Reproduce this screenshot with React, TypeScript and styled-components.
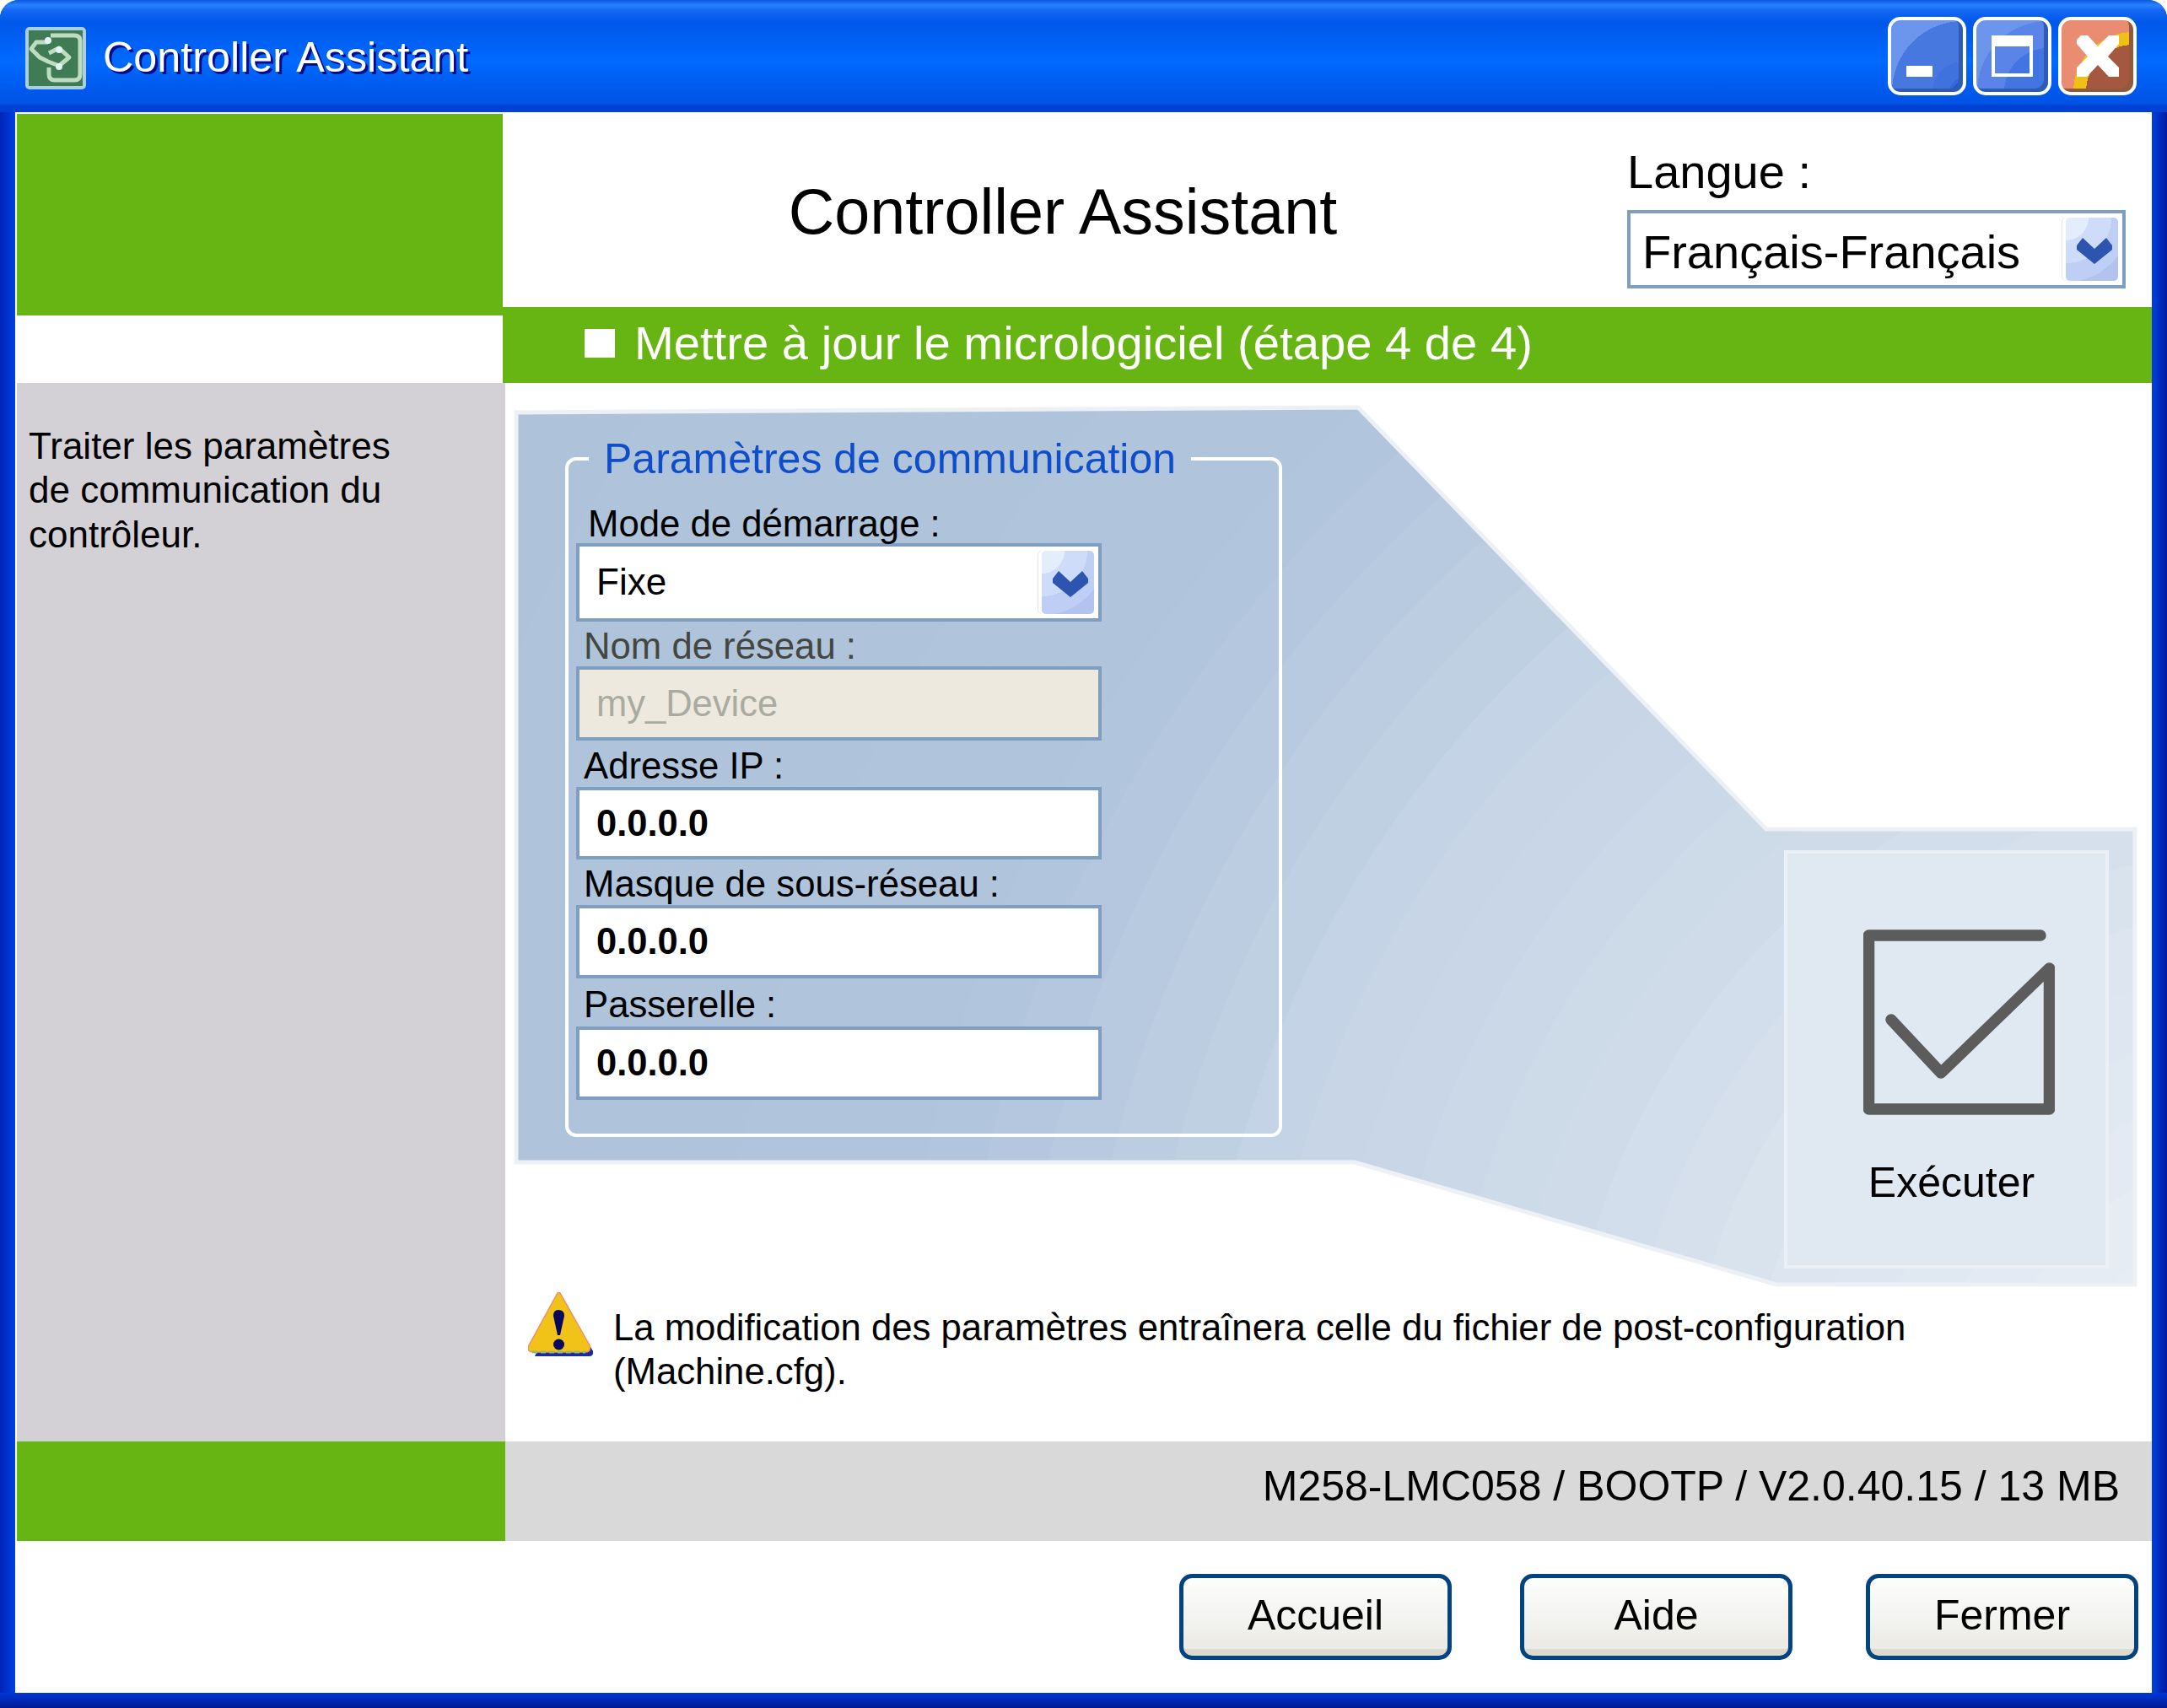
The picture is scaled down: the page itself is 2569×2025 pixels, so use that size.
import React from 'react'
import styled, { createGlobalStyle } from 'styled-components'

const GlobalStyle = createGlobalStyle`
  html, body {
    margin: 0;
    padding: 0;
    background: #fff;
  }

  * {
    box-sizing: border-box;
  }
`

const Window = styled.div`
  width: 2569px;
  height: 2025px;
  display: flex;
  flex-direction: column;
  border-radius: 22px 22px 0 0;
  overflow: hidden;
  font-family: "Liberation Sans", Arial, sans-serif;
  color: #000;
  background: linear-gradient(to right, #0024b8 0, #0040e0 18px, #0040e0 2551px, #001ca0 2569px);
`

const TitleBar = styled.div`
  height: 133px;
  flex: none;
  display: flex;
  align-items: center;
  padding: 5px 36px 0 29px;
  background: linear-gradient(
    to bottom,
    #0a58e0 0,
    #2a82ff 6px,
    #1468f4 12px,
    #0058ea 26px,
    #0060f4 50px,
    #006aff 72px,
    #005cf0 100px,
    #0054e6 122px,
    #0040d4 126px,
    #0040d4 133px
  );
`

const AppIcon = styled.svg`
  width: 74px;
  height: 76px;
  flex: none;
`

const TitleText = styled.div`
  margin: -3px 0 0 19px;
  font-size: 50.300px;
  color: #fff;
  text-shadow: 3px 3px 0 #000c8c;
`

const WindowButtons = styled.div`
  margin-left: auto;
  margin-top: -5px;
  display: flex;
  gap: 8px;
`

const WindowButton = styled.div<{ $tone: 'min' | 'max' | 'close' }>`
  width: 93px;
  height: 93px;
  border: 4px solid #fff;
  border-radius: 15px;
  display: flex;
  align-items: center;
  justify-content: center;
  position: relative;
  background: ${p =>
    p.$tone === 'close'
      ? 'radial-gradient(circle at 100% 100%, #a5573f 0 56px, #f0c015 56px 71px, #ea8c72 71px)'
      : p.$tone === 'max'
      ? 'radial-gradient(circle at 100% 100%, #4275e2 0 52px, #5b84e8 52px 84px, #6c96ec 84px 116px, #7a96e6 116px)'
      : 'radial-gradient(circle at 100% 100%, #0a50d8 0 12px, #3468d6 12px 16px, #3f72dc 16px 36px, #4678e0 36px 84px, #6c96ec 84px)'};
  box-shadow: inset -5px -4px 0 ${p => (p.$tone === 'close' ? '#8f5a3c' : '#2e5cb4')};
`

const MinGlyph = styled.div`
  position: absolute;
  left: 18px;
  top: 54px;
  width: 31px;
  height: 13px;
  background: #fff;
`

const MaxGlyph = styled.div`
  width: 49px;
  height: 49px;
  border: 4px solid #fff;
  border-top-width: 13px;
`

const CloseGlyph = styled.svg`
  width: 50px;
  height: 49px;
`

const Body = styled.div`
  flex: 1;
  margin: 0 18px;
  background: #fff;
  display: flex;
  flex-direction: column;
`

const Content = styled.div`
  height: 1694px;
  padding-left: 2px;
  display: grid;
  grid-template-columns: 579px 1fr;
`

const LeftColumn = styled.div`
  display: flex;
  flex-direction: column;
  padding-top: 2px;
`

const GreenBlock = styled.div`
  width: 576px;
  height: 239px;
  background: #66b512;
`

const SidePanel = styled.div`
  margin-top: 80px;
  height: 1255px;
  padding: 49px 125px 0 14px;
  background: #d3d1d6;
  font-size: 44px;
  line-height: 52.400px;
`

const GreenFoot = styled.div`
  height: 118px;
  background: #66b512;
`

const RightColumn = styled.div`
  display: flex;
  flex-direction: column;
  min-width: 0;
`

const Header = styled.div`
  height: 231px;
  display: flex;
  padding: 41px 31px 0 0;
`

const AppTitle = styled.div`
  flex: 1;
  padding: 32px 8px 0 0;
  text-align: center;
  font-size: 75.500px;
  line-height: 90px;
`

const LanguageBox = styled.div`
  width: 591px;
  font-size: 56px;
  line-height: 60px;
`

const LanguageLabel = styled.div`
  margin-bottom: 15px;
`

const SelectBox = styled.div<{ $large?: boolean }>`
  height: 93px;
  border: 4px solid #7f9fc2;
  background: #fff;
  display: flex;
  align-items: center;
  justify-content: space-between;
  padding: 0 5px 0 ${p => (p.$large ? 14 : 20)}px;
  font-size: ${p => (p.$large ? 56 : 44)}px;
`

const SelectText = styled.span<{ $large?: boolean }>`
  position: relative;
  top: ${p => (p.$large ? 3 : -1)}px;
`

const ArrowButton = styled.div`
  width: 62px;
  height: 75px;
  border-radius: 5px;
  display: flex;
  align-items: center;
  justify-content: center;
  background: radial-gradient(circle 90px at 0 0, #e4edfc 0 30%, #cfdcf9 30% 60%, #bfcef4 60% 85%, #b3c3ef 85%);
  box-shadow: -4px 0 0 #fff, -5px 0 0 #e6e6e6;
`

const Chevron = styled.svg`
  width: 42px;
  height: 31px;
  margin: 4px 0 0 6px;
`

const StepBar = styled.div`
  height: 90px;
  margin-left: -3px;
  padding: 0 0 5px 97px;
  display: flex;
  align-items: center;
  gap: 23px;
  background: #66b512;
  color: #fff;
  font-size: 56.200px;
`

const StepMark = styled.div`
  width: 36px;
  height: 34px;
  background: #fff;
`

const Main = styled.div`
  height: 1255px;
  position: relative;
  padding-top: 62px;
`

const Funnel = styled.svg`
  position: absolute;
  left: 0;
  top: 0;
  width: 100%;
  height: 100%;
`

const WorkRow = styled.div`
  position: relative;
  display: flex;
  align-items: flex-start;
  padding: 0 51px 0 71px;
`

const GroupBox = styled.fieldset`
  width: 850px;
  height: 832px;
  margin: 0;
  padding: 0 0 0 9px;
  border: 4px solid #fff;
  border-radius: 13px;
`

const GroupTitle = styled.legend`
  margin-left: 15px;
  padding: 0 18px;
  font-size: 50px;
  line-height: 56px;
  color: #0f4ecb;
`

const FieldLabel = styled.div<{ $muted?: boolean; $first?: boolean; $height: number }>`
  height: ${p => p.$height}px;
  padding: ${p => (p.$first ? '25px 0 0 14px' : '2px 0 0 9px')};
  line-height: ${p => (p.$first ? 48 : p.$height)}px;
  font-size: 43.700px;
  white-space: nowrap;
  color: ${p => (p.$muted ? '#444640' : '#000')};
`

const TextField = styled.div<{ $disabled?: boolean; $height: number }>`
  width: 623px;
  height: ${p => p.$height}px;
  border: 4px solid #7f9fc2;
  display: flex;
  align-items: center;
  padding-left: 20px;
  font-size: 43.500px;
  font-weight: ${p => (p.$disabled ? 400 : 700)};
  background: ${p => (p.$disabled ? '#ede9de' : '#fff')};
  color: ${p => (p.$disabled ? '#aaaba0' : '#000')};
`

const SmallSelect = styled(SelectBox)`
  width: 623px;
`

const RunCard = styled.div`
  width: 385px;
  height: 496px;
  margin: 492px 0 0 auto;
  padding-top: 90px;
  border: 4px solid #ebf0f6;
  background: #e0e8f1;
  display: flex;
  flex-direction: column;
  align-items: center;
`

const RunIcon = styled.svg`
  width: 227px;
  height: 220px;
  flex: none;
  margin-left: 30px;
`

const RunLabel = styled.div`
  margin: 50px 0 0 12px;
  font-size: 50px;
  line-height: 60px;
`

const WarningRow = styled.div`
  position: relative;
  margin-top: 28px;
  padding-left: 27px;
  display: flex;
  align-items: flex-start;
`

const WarningIcon = styled.svg`
  width: 78px;
  height: 78px;
  flex: none;
`

const WarningText = styled.div`
  margin: 16px 0 0 23px;
  width: 1700px;
  font-size: 43.700px;
  line-height: 52.400px;
`

const StatusBar = styled.div`
  height: 118px;
  display: flex;
  align-items: center;
  justify-content: flex-end;
  padding: 0 38px 12px 0;
  background: #d9d9d9;
  font-size: 50px;
`

const ButtonRow = styled.div`
  flex: 1;
  display: flex;
  justify-content: flex-end;
  align-items: flex-start;
  gap: 81px;
  padding: 39px 16px 0 0;
`

const ActionButton = styled.button`
  width: 323px;
  height: 102px;
  border: 5px solid #03437f;
  border-radius: 15px;
  font-family: inherit;
  font-size: 50px;
  color: #000;
  padding: 0 0 4px;
  background: linear-gradient(
    to bottom,
    #fff 0,
    #fbfbfa 12%,
    #f5f5f3 40%,
    #f1f1ee 62%,
    #ecebe6 82%,
    #e9ecea 91%,
    #ded9cd 91%,
    #ded9cd 100%
  );

  &:last-child {
    margin-left: 6px;
  }
`

const BottomEdge = styled.div`
  height: 18px;
  flex: none;
  background: linear-gradient(to bottom, #0038d8, #001a90);
`

const fields = [
  { label: 'Adresse IP :', value: '0.0.0.0', gap: 55, height: 86 },
  { label: 'Masque de sous-réseau :', value: '0.0.0.0', gap: 54, height: 87 },
  { label: 'Passerelle :', value: '0.0.0.0', gap: 57, height: 87 }
]

// colour of the swirl behind the funnel at a given distance from its centre
const swirlStops: [number, number[]][] = [
  [2500, [174, 194, 218]],
  [1650, [176, 196, 220]],
  [1240, [198, 212, 230]],
  [920, [207, 219, 233]],
  [630, [220, 229, 240]],
  [200, [233, 239, 246]]
]

const swirlColour = (radius: number) => {
  for (let i = 0; i < swirlStops.length - 1; i++) {
    const [outer, from] = swirlStops[i]
    const [inner, to] = swirlStops[i + 1]
    if (radius <= outer && radius >= inner) {
      const t = (outer - radius) / (outer - inner)
      const mix = from.map((c, j) => Math.round(c + (to[j] - c) * t))
      return `rgb(${mix.join(',')})`
    }
  }
  return 'rgb(233,239,246)'
}

const bands = Array.from({ length: 33 }, (_, i) => 2500 - i * 72)

const FunnelPoints = '13,35 1011,29 1495,529 1932,529 1932,1069 1507,1069 1007,924 13,924'

const ArrowIcon = () => (
  <ArrowButton>
    <Chevron viewBox="0 0 42 31">
      <polygon points="0,9 7,0 21,13 35,0 42,9 42,14 21,31 0,14" fill="#2d55b0" />
    </Chevron>
  </ArrowButton>
)

const App: React.FC = () => {
  return (
    <>
      <GlobalStyle />
      <Window>
        <TitleBar>
          <AppIcon viewBox="0 0 74 76">
            <rect x="1" y="1" width="72" height="74" rx="5" fill="#a9cfe3" />
            <rect x="5" y="5" width="64" height="66" fill="#3f7c55" />
            <g fill="none" stroke="#bfdcc0" strokeWidth="5" strokeLinejoin="round">
              <path d="M31 11 H59 Q66 11 66 17 V57 Q66 64 59 64 H36 Q29 64 29 57 V49" />
              <path d="M28 19 H14 L8 27 L18 37 L28 42 L41 47 L53 37 L41 26 L29 32" />
            </g>
            <circle cx="28" cy="17" r="4" fill="#e3f3f2" />
            <circle cx="41" cy="28" r="4" fill="#e3f3f2" />
            <circle cx="41" cy="48" r="4" fill="#e3f3f2" />
          </AppIcon>
          <TitleText>Controller Assistant</TitleText>
          <WindowButtons>
            <WindowButton $tone="min">
              <MinGlyph />
            </WindowButton>
            <WindowButton $tone="max">
              <MaxGlyph />
            </WindowButton>
            <WindowButton $tone="close">
              <CloseGlyph viewBox="0 0 50 49">
                <polygon
                  points="0,5 5,0 13,0 25,13 38,0 50,0 50,10 37,25 50,38 50,49 38,49 25,35 12,49 0,49 0,38 13,25 0,10"
                  fill="#fff"
                />
              </CloseGlyph>
            </WindowButton>
          </WindowButtons>
        </TitleBar>

        <Body>
          <Content>
            <LeftColumn>
              <GreenBlock />
              <SidePanel>Traiter les paramètres de communication du contrôleur.</SidePanel>
              <GreenFoot />
            </LeftColumn>

            <RightColumn>
              <Header>
                <AppTitle>Controller Assistant</AppTitle>
                <LanguageBox>
                  <LanguageLabel>Langue :</LanguageLabel>
                  <SelectBox $large>
                    <SelectText $large>Français-Français</SelectText>
                    <ArrowIcon />
                  </SelectBox>
                </LanguageBox>
              </Header>

              <StepBar>
                <StepMark />
                Mettre à jour le micrologiciel (étape 4 de 4)
              </StepBar>

              <Main>
                <Funnel viewBox="0 0 1952 1255">
                  <defs>
                    <clipPath id="funnel-shape">
                      <polygon points={FunnelPoints} />
                    </clipPath>
                  </defs>
                  <g clipPath="url(#funnel-shape)">
                    {bands.map(radius => (
                      <circle key={radius} cx="2100" cy="1250" r={radius} fill={swirlColour(radius)} />
                    ))}
                  </g>
                  <polygon points={FunnelPoints} fill="none" stroke="#edf1f6" strokeWidth="5" />
                </Funnel>

                <WorkRow>
                  <GroupBox>
                    <GroupTitle>Paramètres de communication</GroupTitle>
                    <FieldLabel $first $height={72}>Mode de démarrage :</FieldLabel>
                    <SmallSelect>
                      <SelectText>Fixe</SelectText>
                      <ArrowIcon />
                    </SmallSelect>
                    <FieldLabel $muted $height={53}>Nom de réseau :</FieldLabel>
                    <TextField $disabled $height={88}>my_Device</TextField>
                    {fields.map(field => (
                      <React.Fragment key={field.label}>
                        <FieldLabel $height={field.gap}>{field.label}</FieldLabel>
                        <TextField $height={field.height}>{field.value}</TextField>
                      </React.Fragment>
                    ))}
                  </GroupBox>

                  <RunCard>
                    <RunIcon viewBox="0 0 227 220">
                      <path
                        d="M210 7 H6.500 V213 H220.500 V46 L92 170 L33 107"
                        fill="none"
                        stroke="#5c5c5c"
                        strokeWidth="13.500"
                        strokeLinecap="round"
                        strokeLinejoin="round"
                      />
                    </RunIcon>
                    <RunLabel>Exécuter</RunLabel>
                  </RunCard>
                </WorkRow>

                <WarningRow>
                  <WarningIcon viewBox="0 0 78 78">
                    <path d="M40 6 L77 70 Q78 76 72 76 L8 76 Z" fill="#1b2a9c" />
                    <path
                      d="M35 1 Q36 0 38 1 L73 63 Q75 71 68 71 L5 71 Q-2 70 1 63 Z"
                      fill="#f1c318"
                      stroke="#ee8f6c"
                      strokeWidth="1.500"
                    />
                    <path d="M5 71 H68" stroke="#93c254" strokeWidth="3" strokeDasharray="6 4" />
                    <path d="M30 28 Q30 21 36 21 Q43 21 43 28 L38 51 H35 Z" fill="#07085c" />
                    <circle cx="36.500" cy="62" r="6.500" fill="#07085c" />
                  </WarningIcon>
                  <WarningText>
                    La modification des paramètres entraînera celle du fichier de post-configuration
                    (Machine.cfg).
                  </WarningText>
                </WarningRow>
              </Main>

              <StatusBar>M258-LMC058 / BOOTP / V2.0.40.15 / 13 MB</StatusBar>
            </RightColumn>
          </Content>

          <ButtonRow>
            <ActionButton>Accueil</ActionButton>
            <ActionButton>Aide</ActionButton>
            <ActionButton>Fermer</ActionButton>
          </ButtonRow>
        </Body>
        <BottomEdge />
      </Window>
    </>
  )
}

export default App
